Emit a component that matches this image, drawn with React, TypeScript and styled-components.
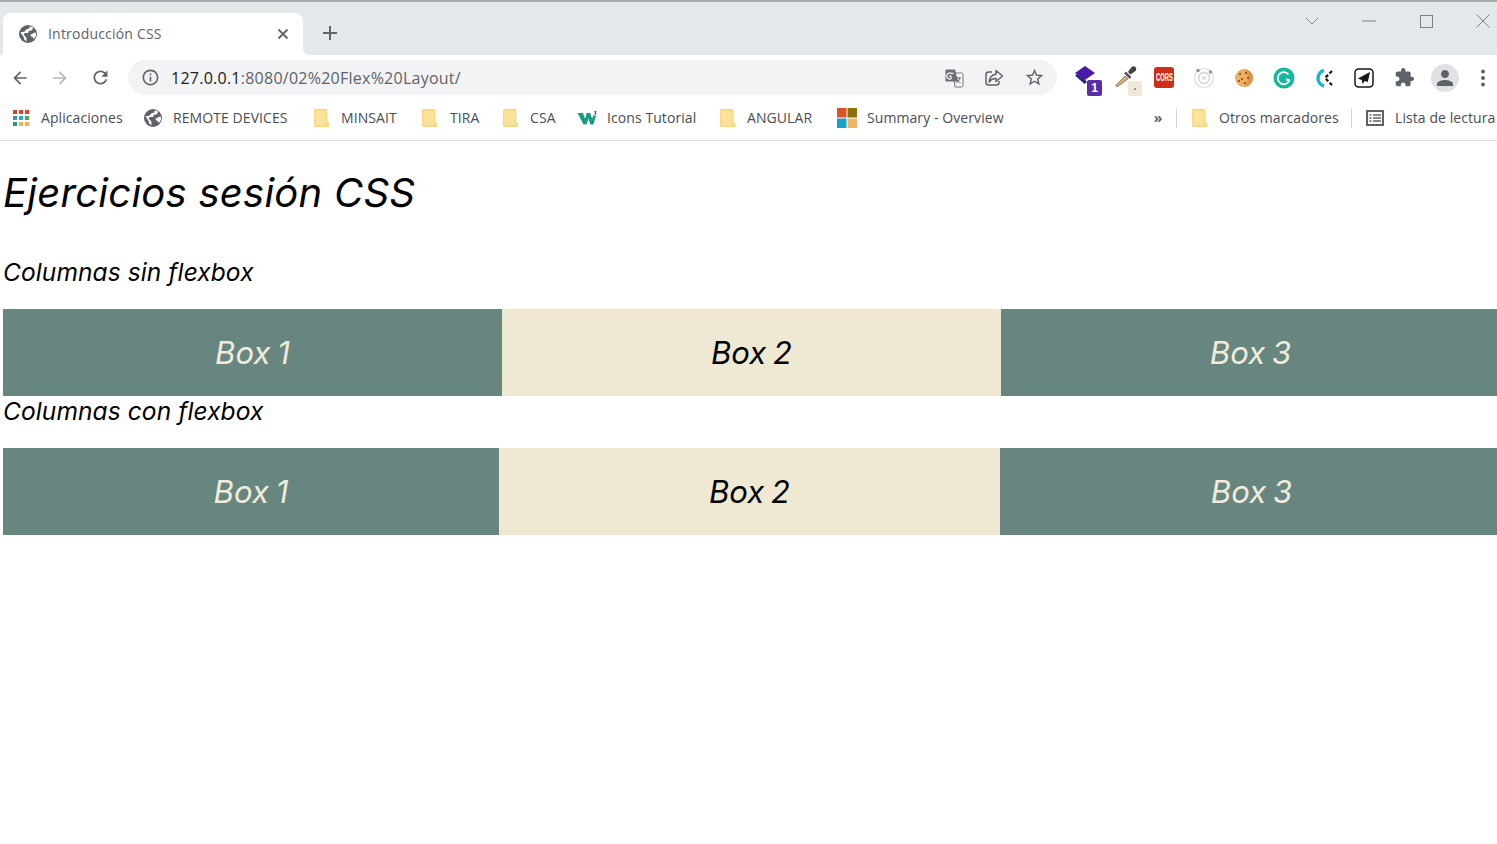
import React from "react";
import styled, { createGlobalStyle } from "styled-components";

const Global = createGlobalStyle`
  html, body { margin: 0; padding: 0; background: #fff; overflow: hidden; width: 1497px; height: 844px; }
`;
const UI = `"Open Sans", "Noto Sans", sans-serif`;
const Shell = styled.div`
  width: 1497px; height: 844px; overflow: hidden; display: flex; flex-direction: column; background: #fff;
`;
const TabStrip = styled.header`
  height: 53px; flex: none; background: #e5e8eb; border-top: 2px solid #a9abac; display: flex; align-items: flex-end; padding-left: 3px;
`;
const Tab = styled.div`
  position: relative; width: 300px; height: 42px; box-sizing: border-box; background: #fff; border-radius: 8px 8px 0 0;
  display: flex; align-items: center; padding: 0 12px 1px 16px; color: #5f6368; font: 14px ${UI};
  &::after { content: ""; position: absolute; right: -8px; bottom: 0; width: 8px; height: 8px; background: radial-gradient(circle at 100% 0, transparent 8px, #fff 8.5px); }
  &::before { content: ""; position: absolute; left: -3px; bottom: 0; width: 3px; height: 3px; background: radial-gradient(circle at 0 0, transparent 3px, #fff 3.5px); }
`;
const TabTitle = styled.span` margin-left: 11px; flex: 1; letter-spacing: .2px; `;
const NewTab = styled.div` width: 16px; height: 16px; margin: 0 0 14px 19px; color: #5f6368; display: flex; `;
const WinControls = styled.div`
  margin-left: auto; align-self: flex-start; height: 38px; display: flex; align-items: center; gap: 41px; padding-right: 6px;
`;
const WinBtn = styled.div` width: 16px; display: flex; justify-content: center; `;
const Toolbar = styled.div`
  height: 42px; flex: none; display: flex; align-items: center; background: #fff; padding-top: 3px; box-sizing: border-box;
`;
const NavBtn = styled.div<{ $dim?: boolean }>`
  width: 40px; height: 36px; flex: none; display: flex; align-items: center; justify-content: center; color: ${p => (p.$dim ? "#b6b8ba" : "#5f6368")};
`;
const Address = styled.div`
  width: 929px; height: 35px; margin-left: 8px; border-radius: 18px; background: #f1f3f4; display: flex; align-items: center; padding-left: 13px; box-sizing: border-box; flex: none;
  color: #5f6368;
`;
const Url = styled.div`
  margin-left: 11px; flex: 1; font: 16px ${UI}; color: #5f6368; letter-spacing: .25px; white-space: nowrap;
  b { font-weight: 400; color: #202124; }
`;
const PillBtn = styled.div` width: 40px; height: 32px; display: flex; align-items: center; justify-content: center; color: #5f6368; &:last-child { margin-right: 3px; } `;
const Exts = styled.div` display: flex; align-items: center; margin-left: 7px; `;
const ExtBtn = styled.div<{ $w?: number; $pl?: number }>`
  position: relative; width: ${p => p.$w ?? 40}px; height: 36px; box-sizing: border-box; padding-left: ${p => p.$pl ?? 0}px; display: flex; align-items: center; justify-content: center; color: #5f6368; flex: none;
`;
const Badge = styled.span`
  position: absolute; right: 2px; bottom: 0; width: 15px; height: 16px; border-radius: 2px; background: #5b2da6; color: #fff; font: 700 12px/16px "Liberation Sans", sans-serif; text-align: center;
`;
const BadgeBlank = styled.span`
  position: absolute; right: 2px; bottom: 0; width: 14px; height: 15px; border-radius: 2px; background: #efe8d6;
  &::after { content: ""; position: absolute; left: 6px; top: 7px; width: 2px; height: 2px; background: #a09a88; }
`;
const CorsIcon = styled.span`
  width: 20px; height: 21px; border-radius: 3px; background: #cf2f1a; display: flex; align-items: center; justify-content: center;
`;
const CorsText = styled.span`
  display: block; color: #fff; font: 700 10px/12px "Liberation Sans", sans-serif; transform: scaleX(.58); letter-spacing: 0; flex: none;
`;
const Avatar = styled.span`
  width: 28px; height: 28px; border-radius: 50%; background: #dfe1e5; display: flex; align-items: center; justify-content: center; color: #5f6368;
`;
const Bookmarks = styled.nav`
  height: 44px; flex: none; box-sizing: border-box; border-bottom: 1px solid #dcdddf; background: #fff; display: flex; align-items: center; padding-left: 12px; padding-bottom: 2px;
  font: 14px ${UI}; color: #4a4d52; white-space: nowrap;
`;
const Mark = styled.div<{ $ml?: number }>`
  display: flex; align-items: center; margin-left: ${p => p.$ml ?? 0}px;
  & > svg { flex: none; }
`;
const MarkLabel = styled.span<{ $w: number; $ml: number }>`
  display: block; width: ${p => p.$w}px; margin-left: ${p => p.$ml}px; letter-spacing: .08px;
`;
const Chevrons = styled.span`
  margin-left: 145px; width: 16px; font: 700 14px "Noto Sans", sans-serif; color: #5f6368; text-align: center;
`;
const Sep = styled.i<{ $ml: number }>` display: block; width: 1px; height: 20px; background: #d5d6d8; margin-left: ${p => p.$ml}px; flex: none; `;

const Page = styled.main`
  padding: 28px 0 0 3px; color: #000; width: 1510px;
`;
const Title = styled.h1`
  margin: 0 0 40px; font: italic 400 40px/48px Inter, sans-serif; letter-spacing: .25px;
`;
const Sub = styled.h2`
  margin: 0 0 22px; font: italic 450 24.5px/30px Inter, sans-serif; letter-spacing: .1px;
`;
const Row = styled.section` display: flex; `;
const Box = styled.div<{ $w: number; $alt?: boolean }>`
  width: ${p => p.$w}px; height: 87px; flex: none; display: flex; align-items: center; justify-content: center;
  background: ${p => (p.$alt ? "#efe8d3" : "#688680")}; color: ${p => (p.$alt ? "#000" : "#f1ebdb")};
  font: italic 450 31px Inter, sans-serif; letter-spacing: .1px; word-spacing: -2px;
`;

const M = ({ d, s = 20, flip }: { d: string; s?: number; flip?: boolean }) => (
  <svg width={s} height={s} viewBox="0 0 24 24" fill="currentColor" style={flip ? { transform: "scaleX(-1)" } : undefined}><path d={d} /></svg>
);
const ARROW = "M20 11H7.83l5.59-5.59L12 4l-8 8 8 8 1.41-1.41L7.83 13H20v-2z";
const REFRESH = "M17.65 6.35C16.2 4.9 14.21 4 12 4c-4.42 0-7.99 3.58-7.99 8s3.57 8 7.99 8c3.73 0 6.84-2.55 7.73-6h-2.08c-.82 2.33-3.04 4-5.65 4-3.31 0-6-2.69-6-6s2.69-6 6-6c1.66 0 3.14.69 4.22 1.78L13 11h7V4l-2.35 2.35z";
const INFO = "M11 7h2v2h-2zm0 4h2v6h-2zm1-9C6.48 2 2 6.48 2 12s4.48 10 10 10 10-4.48 10-10S17.52 2 12 2zm0 18c-4.41 0-8-3.59-8-8s3.59-8 8-8 8 3.59 8 8-3.59 8-8 8z";
const STAR = "M22 9.24l-7.19-.62L12 2 9.19 8.63 2 9.24l5.46 4.73L5.82 21 12 17.27 18.18 21l-1.63-7.03L22 9.24zM12 15.4l-3.76 2.27 1-4.28-3.32-2.88 4.38-.38L12 6.1l1.71 4.04 4.38.38-3.32 2.88 1 4.28L12 15.4z";
const PUZZLE = "M20.5 11H19V7c0-1.1-.9-2-2-2h-4V3.5C13 2.12 11.88 1 10.5 1S8 2.12 8 3.5V5H4c-1.1 0-1.99.9-1.99 2v3.8H3.5c1.49 0 2.7 1.21 2.7 2.7s-1.21 2.7-2.7 2.7H2V20c0 1.1.9 2 2 2h3.8v-1.5c0-1.49 1.21-2.7 2.7-2.7 1.49 0 2.7 1.21 2.7 2.7V22H17c1.1 0 2-.9 2-2v-4h1.5c1.38 0 2.5-1.12 2.5-2.5S21.88 11 20.5 11z";
const PERSON = "M12 12c2.21 0 4-1.79 4-4s-1.79-4-4-4-4 1.79-4 4 1.79 4 4 4zm0 2c-2.67 0-8 1.34-8 4v2h16v-2c0-2.66-5.33-4-8-4z";

const Globe = ({ s = 20 }: { s?: number }) => (
  <svg width={s} height={s} viewBox="0 0 20 20">
    <circle cx="10" cy="10" r="10" fill="#5f6368" />
    <path d="M1.500 8 6 7.500 8 5 11.500 4l.5-2.500 4 1.500-2 3-3 .5L10 9H6.500L5 10.500l3 3 .5 4.500L6 16.500 5 13z" fill="#fff" />
    <path d="M13 10.500 18.500 8l.5 4-2.500 3.500-1.500-2.500-2-.5z" fill="#fff" />
  </svg>
);
const Folder = () => (
  <svg width="18" height="20" viewBox="0.5 0.5 16.500 19">
    <path d="M2.500 1.500h10c.8 0 1.300.5 1.300 1.300V14.500h1.700v3c0 .6-.4 1-1 1H2.500c-.8 0-1.300-.5-1.300-1.300V2.800c0-.8.500-1.300 1.300-1.300z" fill="#f9d67e" />
    <path d="M3 2.800h9.200c.3 0 .4.100.4.400v11.300c0 1 .5 2 1 2.700H3c-.3 0-.5-.2-.5-.5V3.300c0-.3.200-.5.500-.5z" fill="#fbe29c" />
  </svg>
);
const Apps = () => {
  const c = ["#d8432c", "#d8432c", "#d8432c", "#3f8ecb", "#2ba6dc", "#5fa05a", "#1f9a8e", "#f0b04f", "#f0b04f"];
  return (
    <svg width="18" height="18" viewBox="0 0 18 18">
      {c.map((f, i) => <rect key={i} x={1 + (i % 3) * 6} y={1 + Math.floor(i / 3) * 6} width="4" height="4" fill={f} />)}
    </svg>
  );
};
const W3 = () => (
  <svg width="21" height="16" viewBox="0 0 20 16" fill="#169b84">
    <path d="M0 3h5.500l2 5.800L9.300 3h3.400l2 5.800.9-3.300h3L15.800 14.500h-3L11 8.500 9 14.500H6z" />
    <path d="M16.600 1h2.200v.6l-.7.800c.5.200.8.500.8 1 0 .7-.6 1.100-1.300 1.100-.4 0-.8-.1-1.100-.4l.3-.5c.2.200.5.300.7.300.3 0 .5-.2.5-.5s-.2-.5-.7-.5v-.5l.7-.8h-1.300z" fill="#222" />
  </svg>
);
const Ms = () => (
  <svg width="20" height="20" viewBox="0 0 20 20">
    <rect width="9.500" height="9.500" fill="#d95426" /><rect x="10.500" width="9.500" height="9.500" fill="#8a7008" />
    <rect y="10.500" width="9.500" height="9.500" fill="#16a2c9" /><rect x="10.500" y="10.500" width="9.500" height="9.500" fill="#efb564" />
  </svg>
);
const Translate = () => (
  <svg width="20" height="20" viewBox="0 0 20 20">
    <path d="M9 5h8.500c.8 0 1.500.7 1.500 1.500v11c0 .8-.7 1.500-1.500 1.500H11z" fill="#f5f6f6" stroke="#6f7377" strokeWidth="1" />
    <path d="M2.500 1.500h8.500l3 12H2.500c-.6 0-1-.4-1-1v-10c0-.6.4-1 1-1z" fill="#6c7074" />
    <path d="M9.400 5.300H7a3 3 0 1 0 0 5.400V8H5" fill="none" stroke="#fff" strokeWidth="1.200" />
    <path d="M12 10h5M14.500 9v1M16 10c-.5 2-2 4-4 5M13 11.500c.8 1.500 2 3 3.700 3.500" fill="none" stroke="#5f6368" strokeWidth="1" />
  </svg>
);
const Share = () => (
  <svg width="20" height="20" viewBox="0 0 20 20" fill="none" stroke="#5f6368" strokeWidth="1.500" strokeLinejoin="round">
    <path d="M8 4H4.500C3.100 4 2 5.100 2 6.500v8C2 15.900 3.100 17 4.500 17h8c1.400 0 2.500-1.100 2.500-2.500V13" />
    <path d="M12 2.500 18.500 8 12 13.500V10.600c-3.400 0-5.300 1.200-6.800 3.400.4-4.600 2.600-7.200 6.800-7.700z" />
  </svg>
);
const Layers = () => (
  <svg width="24" height="24" viewBox="0 0 24 24" style={{ marginTop: -4 }}>
    <path d="M3 11.500 7 9l8 9-2.500 2z" fill="#1f2a80" />
    <path d="M3 9 13 2l10 7-10 7z" fill="#4a1ba8" />
  </svg>
);
const Dropper = () => (
  <svg width="24" height="26" viewBox="0 0 24 26" style={{ marginTop: -4, marginLeft: 4 }}>
    <path d="M3 24l-1.500-1.500L11 13l3 3z" fill="#e0a862" stroke="#8a8a8a" strokeWidth="1" />
    <path d="M10 10.500l5.500 5.500 2-2-5.500-5.500z" fill="#5a5a5a" />
    <path d="M14 9l3.500-5c1-1 3-1 4 0s1 3 0 4l-5 3.500z" fill="#444" />
  </svg>
);
const Ion = () => (
  <svg width="22" height="22" viewBox="0 0 22 22" fill="none" stroke="#d8d9da">
    <circle cx="11" cy="11" r="9.500" strokeWidth="1.200" />
    <circle cx="11" cy="11" r="5.500" strokeWidth="1.800" />
    <circle cx="11" cy="11" r="2.300" fill="#e4e5e6" stroke="none" />
    <circle cx="5" cy="3.500" r="1.700" fill="#8d8f91" stroke="none" />
    <circle cx="17.500" cy="5" r="1.700" fill="#8d8f91" stroke="none" />
  </svg>
);
const Cookie = () => (
  <svg width="20" height="20" viewBox="0 0 20 20">
    <circle cx="10" cy="10" r="9" fill="#eeb062" />
    <path d="M10 1a9 9 0 0 1 0 18 12 12 0 0 0 0-18z" fill="#dc9645" />
    {[[6, 6], [12, 5], [14, 10], [8, 11], [5, 13], [11, 15]].map(([x, y], i) => <circle key={i} cx={x} cy={y} r="1.100" fill="#7a4a24" />)}
  </svg>
);
const Gram = () => (
  <svg width="22" height="22" viewBox="0 0 22 22">
    <circle cx="11" cy="11" r="10.500" fill="#15b79f" />
    <path d="M15.500 7.500A6 6 0 1 0 16.500 13l-1.200 2M16.500 13 13 12.500" fill="none" stroke="#fff" strokeWidth="1.800" />
  </svg>
);
const Clock = () => (
  <svg width="22" height="24" viewBox="0 0 22 24" fill="none">
    <path d="M11 4.500A8 8 0 0 0 11 20" stroke="#16b6d4" strokeWidth="3.400" />
    <path d="M19 5l-7 7 7 7" stroke="#111" strokeWidth="2.200" strokeDasharray="3.500 2" />
  </svg>
);
const Plane = () => (
  <svg width="20" height="20" viewBox="0 0 20 20">
    <rect x="1" y="1" width="18" height="18" rx="3.500" fill="#fff" stroke="#17181a" strokeWidth="1.500" />
    <path d="M16 4 3.800 10.500l4 1.500L8.500 16l2.300-3 3 1z" fill="#17181a" />
  </svg>
);

type B = { icon: React.ReactNode; label: string; ml: number; w: number; gap: number };
const marks: B[] = [
  { icon: <Apps />, label: "Aplicaciones", ml: 0, w: 82, gap: 11 },
  { icon: <Globe s={18} />, label: "REMOTE DEVICES", ml: 21, w: 118, gap: 11 },
  { icon: <Folder />, label: "MINSAIT", ml: 22, w: 58, gap: 10 },
  { icon: <Folder />, label: "TIRA", ml: 22, w: 31, gap: 11 },
  { icon: <Folder />, label: "CSA", ml: 21, w: 28, gap: 10 },
  { icon: <W3 />, label: "Icons Tutorial", ml: 19, w: 90, gap: 9 },
  { icon: <Folder />, label: "ANGULAR", ml: 22, w: 68, gap: 10 },
  { icon: <Ms />, label: "Summary - Overview", ml: 22, w: 138, gap: 10 },
];

export default function App() {
  return (
    <Shell>
      <Global />
      <TabStrip>
        <Tab>
          <Globe s={18} />
          <TabTitle>Introducción CSS</TabTitle>
          <svg width="16" height="16" viewBox="0 0 16 16" stroke="#5f6368" strokeWidth="1.800"><path d="M3.500 3.500l9 9M12.500 3.500l-9 9" /></svg>
        </Tab>
        <NewTab>
          <svg width="16" height="16" viewBox="0 0 16 16" stroke="currentColor" strokeWidth="2"><path d="M8 1v14M1 8h14" /></svg>
        </NewTab>
        <WinControls>
          <WinBtn><svg width="14" height="8" viewBox="0 0 14 8" fill="none" stroke="#8c8e90"><path d="M.5.500 7 7l6.500-6.500" /></svg></WinBtn>
          <WinBtn><svg width="14" height="2" viewBox="0 0 14 2" stroke="#808080"><path d="M0 1h14" /></svg></WinBtn>
          <WinBtn><svg width="13" height="13" viewBox="0 0 13 13" fill="none" stroke="#808080"><rect x=".5" y=".5" width="12" height="12" /></svg></WinBtn>
          <WinBtn><svg width="14" height="14" viewBox="0 0 14 14" stroke="#808080"><path d="M.5.500l13 13M13.500.500l-13 13" /></svg></WinBtn>
        </WinControls>
      </TabStrip>
      <Toolbar>
        <NavBtn><M d={ARROW} /></NavBtn>
        <NavBtn $dim><M d={ARROW} flip /></NavBtn>
        <NavBtn><M d={REFRESH} s={21} /></NavBtn>
        <Address>
          <M d={INFO} s={19} />
          <Url><b>127.0.0.1</b>:8080/02%20Flex%20Layout/</Url>
          <PillBtn><Translate /></PillBtn>
          <PillBtn><Share /></PillBtn>
          <PillBtn><M d={STAR} s={21} /></PillBtn>
        </Address>
        <Exts>
          <ExtBtn><Layers /><Badge>1</Badge></ExtBtn>
          <ExtBtn><Dropper /><BadgeBlank /></ExtBtn>
          <ExtBtn><CorsIcon><CorsText>CORS</CorsText></CorsIcon></ExtBtn>
          <ExtBtn><Ion /></ExtBtn>
          <ExtBtn><Cookie /></ExtBtn>
          <ExtBtn><Gram /></ExtBtn>
          <ExtBtn><Clock /></ExtBtn>
          <ExtBtn><Plane /></ExtBtn>
          <ExtBtn><M d={PUZZLE} s={21} /></ExtBtn>
          <ExtBtn $pl={1}><Avatar><M d={PERSON} s={24} /></Avatar></ExtBtn>
          <ExtBtn $w={33} $pl={5}><svg width="4" height="18" viewBox="0 0 4 18" fill="#5f6368"><circle cx="2" cy="2.500" r="2" /><circle cx="2" cy="9" r="2" /><circle cx="2" cy="15.500" r="2" /></svg></ExtBtn>
        </Exts>
      </Toolbar>
      <Bookmarks>
        {marks.map(m => (
          <Mark key={m.label} $ml={m.ml}>{m.icon}<MarkLabel $w={m.w} $ml={m.gap}>{m.label}</MarkLabel></Mark>
        ))}
        <Chevrons>»</Chevrons>
        <Sep $ml={10} />
        <Mark $ml={14}><Folder /><MarkLabel $w={119} $ml={10}>Otros marcadores</MarkLabel></Mark>
        <Sep $ml={13} />
        <Mark $ml={14}>
          <svg width="18" height="18" viewBox="0 0 18 18" fill="none" stroke="#5f6368" strokeWidth="2"><rect x="1" y="2" width="16" height="14" /><path d="M3.500 6h2M7 6h8M3.500 9h2M7 9h8M3.500 12h2M7 12h8" strokeWidth="1.500" /></svg>
          <MarkLabel $w={100} $ml={11}>Lista de lectura</MarkLabel>
        </Mark>
      </Bookmarks>
      <Page>
        <Title>Ejercicios sesión CSS</Title>
        <Sub>Columnas sin flexbox</Sub>
        <Row>
          <Box $w={499}>Box 1</Box>
          <Box $w={499} $alt>Box 2</Box>
          <Box $w={499}>Box 3</Box>
        </Row>
        <Sub>Columnas con flexbox</Sub>
        <Row>
          <Box $w={496}>Box 1</Box>
          <Box $w={501} $alt>Box 2</Box>
          <Box $w={503}>Box 3</Box>
        </Row>
      </Page>
    </Shell>
  );
}
